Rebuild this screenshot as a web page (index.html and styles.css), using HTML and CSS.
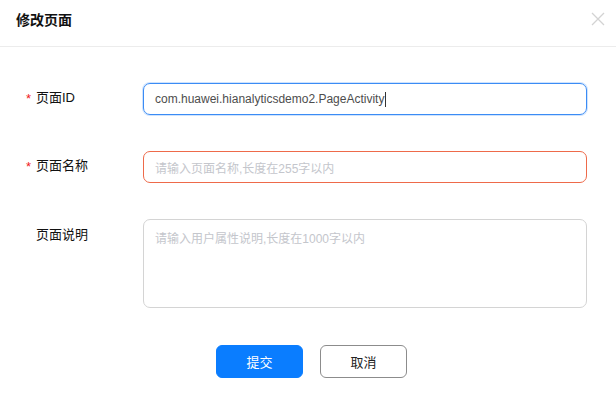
FILE: index.html
```html
<!DOCTYPE html>
<html lang="zh">
<head>
<meta charset="utf-8">
<link rel="stylesheet" href="styles.css">
</head>
<body>
<div class="dialog">
  <div class="header">
    <div class="title">修改页面</div>
    <svg class="close" width="14" height="14" viewBox="0 0 14 14"><path d="M1 1L13 13M13 1L1 13" stroke="#d3d3d3" stroke-width="1.3" fill="none"/></svg>
  </div>
  <div class="body">
    <div class="row">
      <div class="label"><span class="star">*</span>页面ID</div>
      <div class="field focus"><span class="value">com.huawei.hianalyticsdemo2.PageActivity</span><span class="caret"></span></div>
    </div>
    <div class="row">
      <div class="label"><span class="star">*</span>页面名称</div>
      <div class="field error"><span class="ph">请输入页面名称,长度在255字以内</span></div>
    </div>
    <div class="row top">
      <div class="label"><span class="star blank">*</span>页面说明</div>
      <div class="field area"><span class="ph">请输入用户属性说明,长度在1000字以内</span></div>
    </div>
    <div class="actions">
      <button class="btn primary">提交</button>
      <button class="btn">取消</button>
    </div>
  </div>
</div>
</body>
</html>
```
FILE: styles.css
```css
* { box-sizing: border-box; }
html, body { margin: 0; padding: 0; background: #fff; }
body {
  font-family: "Liberation Sans", "Noto Sans CJK SC", sans-serif;
  color: #1a1a1a;
  width: 616px;
  height: 396px;
  overflow: hidden;
}
.dialog { width: 616px; }
.header {
  height: 47px;
  border-bottom: 1px solid #ececec;
  display: flex;
  align-items: center;
  justify-content: space-between;
  padding: 0 11px 8px 16px;
}
.title { font-size: 14px; font-weight: bold; color: #111; }
.close { display: block; }
.body { padding: 36px 29px 0 26px; }
.row {
  display: flex;
  align-items: center;
  margin-bottom: 36px;
}
.row.top { align-items: flex-start; margin-bottom: 37px; }
.row.top .label { padding-top: 5px; }
.label {
  width: 117px;
  font-size: 13px;
  color: #111;
  display: flex;
  align-items: center;
  margin-top: -5px;
}
.row.top .label { margin-top: 0; }
.star { color: #f01b1b; width: 10px; font-size: 13px; position: relative; top: 2px; }
.star.blank { visibility: hidden; }
.field {
  flex: 1;
  height: 32px;
  border: 1px solid #d4d4d4;
  border-radius: 7px;
  display: flex;
  align-items: center;
  padding: 0 11px;
  font-size: 12px;
}
.field.focus {
  border-color: #3b8cf5;
  box-shadow: 0 0 0 1px #cfe3fd;
}
.field.error { border-color: #ee6a4a; }
.field.area { height: 89px; align-items: flex-start; padding-top: 9px; }
.value { color: #4d4d4d; }
.caret { display: inline-block; width: 1px; height: 15px; background: #333; margin-left: 1px; }
.ph { color: #c4c6cc; }
.actions {
  display: flex;
  gap: 17px;
  padding-left: 190px;
}
.btn {
  width: 87px;
  height: 33px;
  border-radius: 6px;
  border: 1px solid #8c8c8c;
  background: #fff;
  font-family: "Liberation Sans", "Noto Sans CJK SC", sans-serif;
  font-size: 13px;
  color: #222;
  padding: 0;
}
.btn.primary {
  background: #0a7dff;
  border-color: #0a7dff;
  color: #fff;
}
```
